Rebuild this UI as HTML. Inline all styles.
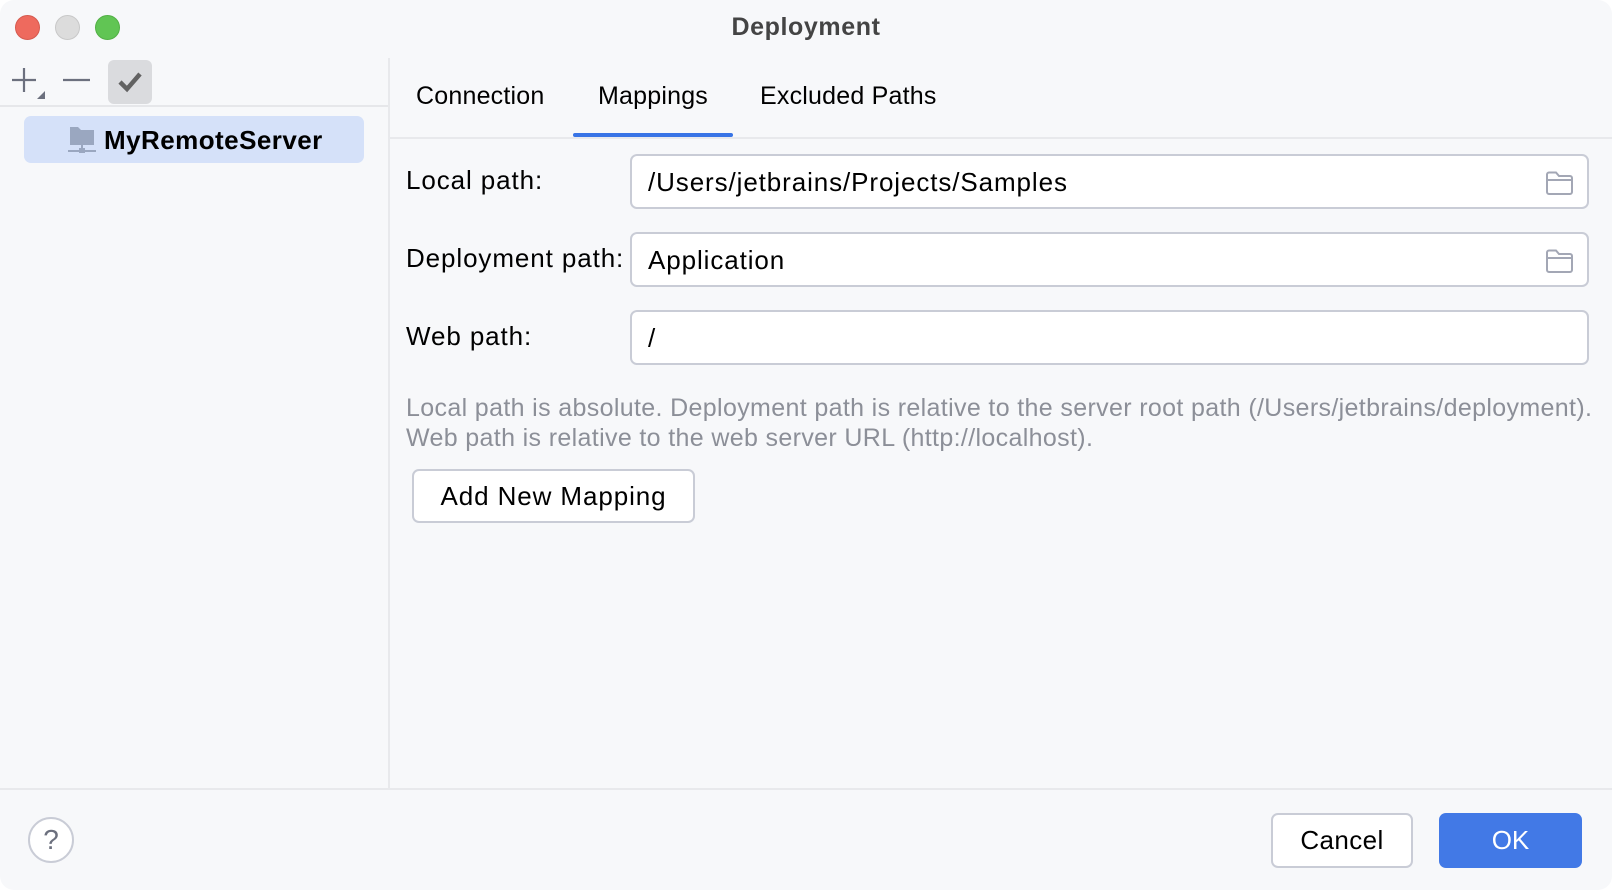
<!DOCTYPE html>
<html><head><meta charset="utf-8"><style>
*{margin:0;padding:0;box-sizing:border-box}
body{width:1612px;height:890px;background:#fff;font-family:"Liberation Sans",sans-serif;position:relative;overflow:hidden;color:#000}
.win{position:absolute;left:0;top:0;width:1612px;height:890px;background:#f7f8fa;border-radius:14px;overflow:hidden}
.a{position:absolute}
.dot{position:absolute;width:25px;height:25px;border-radius:50%;top:15px}
.t{font-size:25px;position:absolute;white-space:nowrap;line-height:1}
.l{font-size:26px;letter-spacing:0.9px}
.inp{position:absolute;left:630px;width:959px;height:55px;background:#fff;border:2px solid #c9ccd6;border-radius:7px}
.inp span{position:absolute;left:16px;top:11px;font-size:26px;letter-spacing:0.9px}
.fold{position:absolute;right:13px;top:14px}
.btn{position:absolute;border-radius:7px;font-size:26px;text-align:center}
</style></head><body><div class="win">
<div class="dot" style="left:15px;background:#ee6a5e;border:1px solid #d55a4f"></div>
<div class="dot" style="left:55px;background:#dcdcdc;border:1px solid #c8c8c8"></div>
<div class="dot" style="left:95px;background:#61c554;border:1px solid #52b045"></div>
<div class="t" style="left:0;width:1612px;text-align:center;top:15px;font-weight:bold;font-size:25px;letter-spacing:0.6px;color:#444">Deployment</div>
<svg class="a" style="left:10px;top:64px" width="36" height="36"><path d="M2 16h24M14 4v24" stroke="#6c707e" stroke-width="2.2"/><path d="M35 27v8h-8z" fill="#6c707e"/></svg>
<svg class="a" style="left:63px;top:78px" width="28" height="4"><path d="M0 2h27" stroke="#6c707e" stroke-width="2.2"/></svg>
<div class="a" style="left:108px;top:60px;width:44px;height:44px;background:#dadbde;border-radius:6px"></div>
<svg class="a" style="left:118px;top:70px" width="26" height="24"><path d="M2 12l7 7L22 4" stroke="#626262" stroke-width="4.5" fill="none"/></svg>
<div class="a" style="left:0;top:105px;width:389px;height:2px;background:#e6e7ea"></div>
<div class="a" style="left:388px;top:58px;width:2px;height:731px;background:#e8e9ec"></div>
<div class="a" style="left:24px;top:116px;width:340px;height:47px;background:#d5e1f9;border-radius:7px"></div>
<svg class="a" style="left:68px;top:126px" width="30" height="28"><path d="M2 1h8l3 3h13v15H2z" fill="#9aa7c0"/><path d="M0 25h28M14 19v6" stroke="#9aa7c0" stroke-width="2"/><rect x="11" y="22" width="6" height="5" fill="#9aa7c0"/></svg>
<div class="t" style="left:104px;top:127px;font-weight:bold;font-size:26px;letter-spacing:0.45px">MyRemoteServer</div>
<div class="t" style="left:416px;top:84px;letter-spacing:0.2px">Connection</div>
<div class="t" style="left:598px;top:84px;letter-spacing:0.2px">Mappings</div>
<div class="t" style="left:760px;top:84px;letter-spacing:0.2px">Excluded Paths</div>
<div class="a" style="left:390px;top:137px;width:1222px;height:2px;background:#e8e9ec"></div>
<div class="a" style="left:573px;top:133px;width:160px;height:4px;background:#3874e6;border-radius:2px"></div>
<div class="t l" style="left:406px;top:167px">Local path:</div>
<div class="t l" style="left:406px;top:245px">Deployment path:</div>
<div class="t l" style="left:406px;top:323px">Web path:</div>
<div class="inp" style="top:154px"><span>/Users/jetbrains/Projects/Samples</span><svg class="fold" width="30" height="26"><path d="M3 4.5a2 2 0 0 1 2-2h7l3 3.5h11a2 2 0 0 1 2 2V22a2 2 0 0 1-2 2H5a2 2 0 0 1-2-2z" fill="none" stroke="#a3a7b5" stroke-width="2"/><path d="M3 10h25" stroke="#a3a7b5" stroke-width="2"/></svg></div>
<div class="inp" style="top:232px"><span>Application</span><svg class="fold" width="30" height="26"><path d="M3 4.5a2 2 0 0 1 2-2h7l3 3.5h11a2 2 0 0 1 2 2V22a2 2 0 0 1-2 2H5a2 2 0 0 1-2-2z" fill="none" stroke="#a3a7b5" stroke-width="2"/><path d="M3 10h25" stroke="#a3a7b5" stroke-width="2"/></svg></div>
<div class="inp" style="top:310px"><span>/</span></div>
<div class="t" style="left:406px;top:396px;color:#8c8f98;font-size:25px;letter-spacing:0.35px">Local path is absolute. Deployment path is relative to the server root path (/Users/jetbrains/deployment).</div>
<div class="t" style="left:406px;top:426px;color:#8c8f98;font-size:25px;letter-spacing:0.35px">Web path is relative to the web server URL (http://localhost).</div>
<div class="btn" style="left:412px;top:469px;width:283px;height:54px;background:#fff;border:2px solid #c9ccd6;line-height:50px;letter-spacing:0.9px">Add New Mapping</div>
<div class="a" style="left:0;top:788px;width:1612px;height:2px;background:#e8e9ec"></div>
<div class="a" style="left:28px;top:817px;width:46px;height:46px;border:2px solid #c9ccd6;border-radius:50%;background:#fff;text-align:center;font-size:28px;line-height:42px;color:#6c707e">?</div>
<div class="btn" style="left:1271px;top:813px;width:142px;height:55px;background:#fff;border:2px solid #c9ccd6;line-height:51px;letter-spacing:0.4px">Cancel</div>
<div class="btn" style="left:1439px;top:813px;width:143px;height:55px;background:#4279e6;color:#fff;line-height:55px">OK</div>
</div></body></html>
